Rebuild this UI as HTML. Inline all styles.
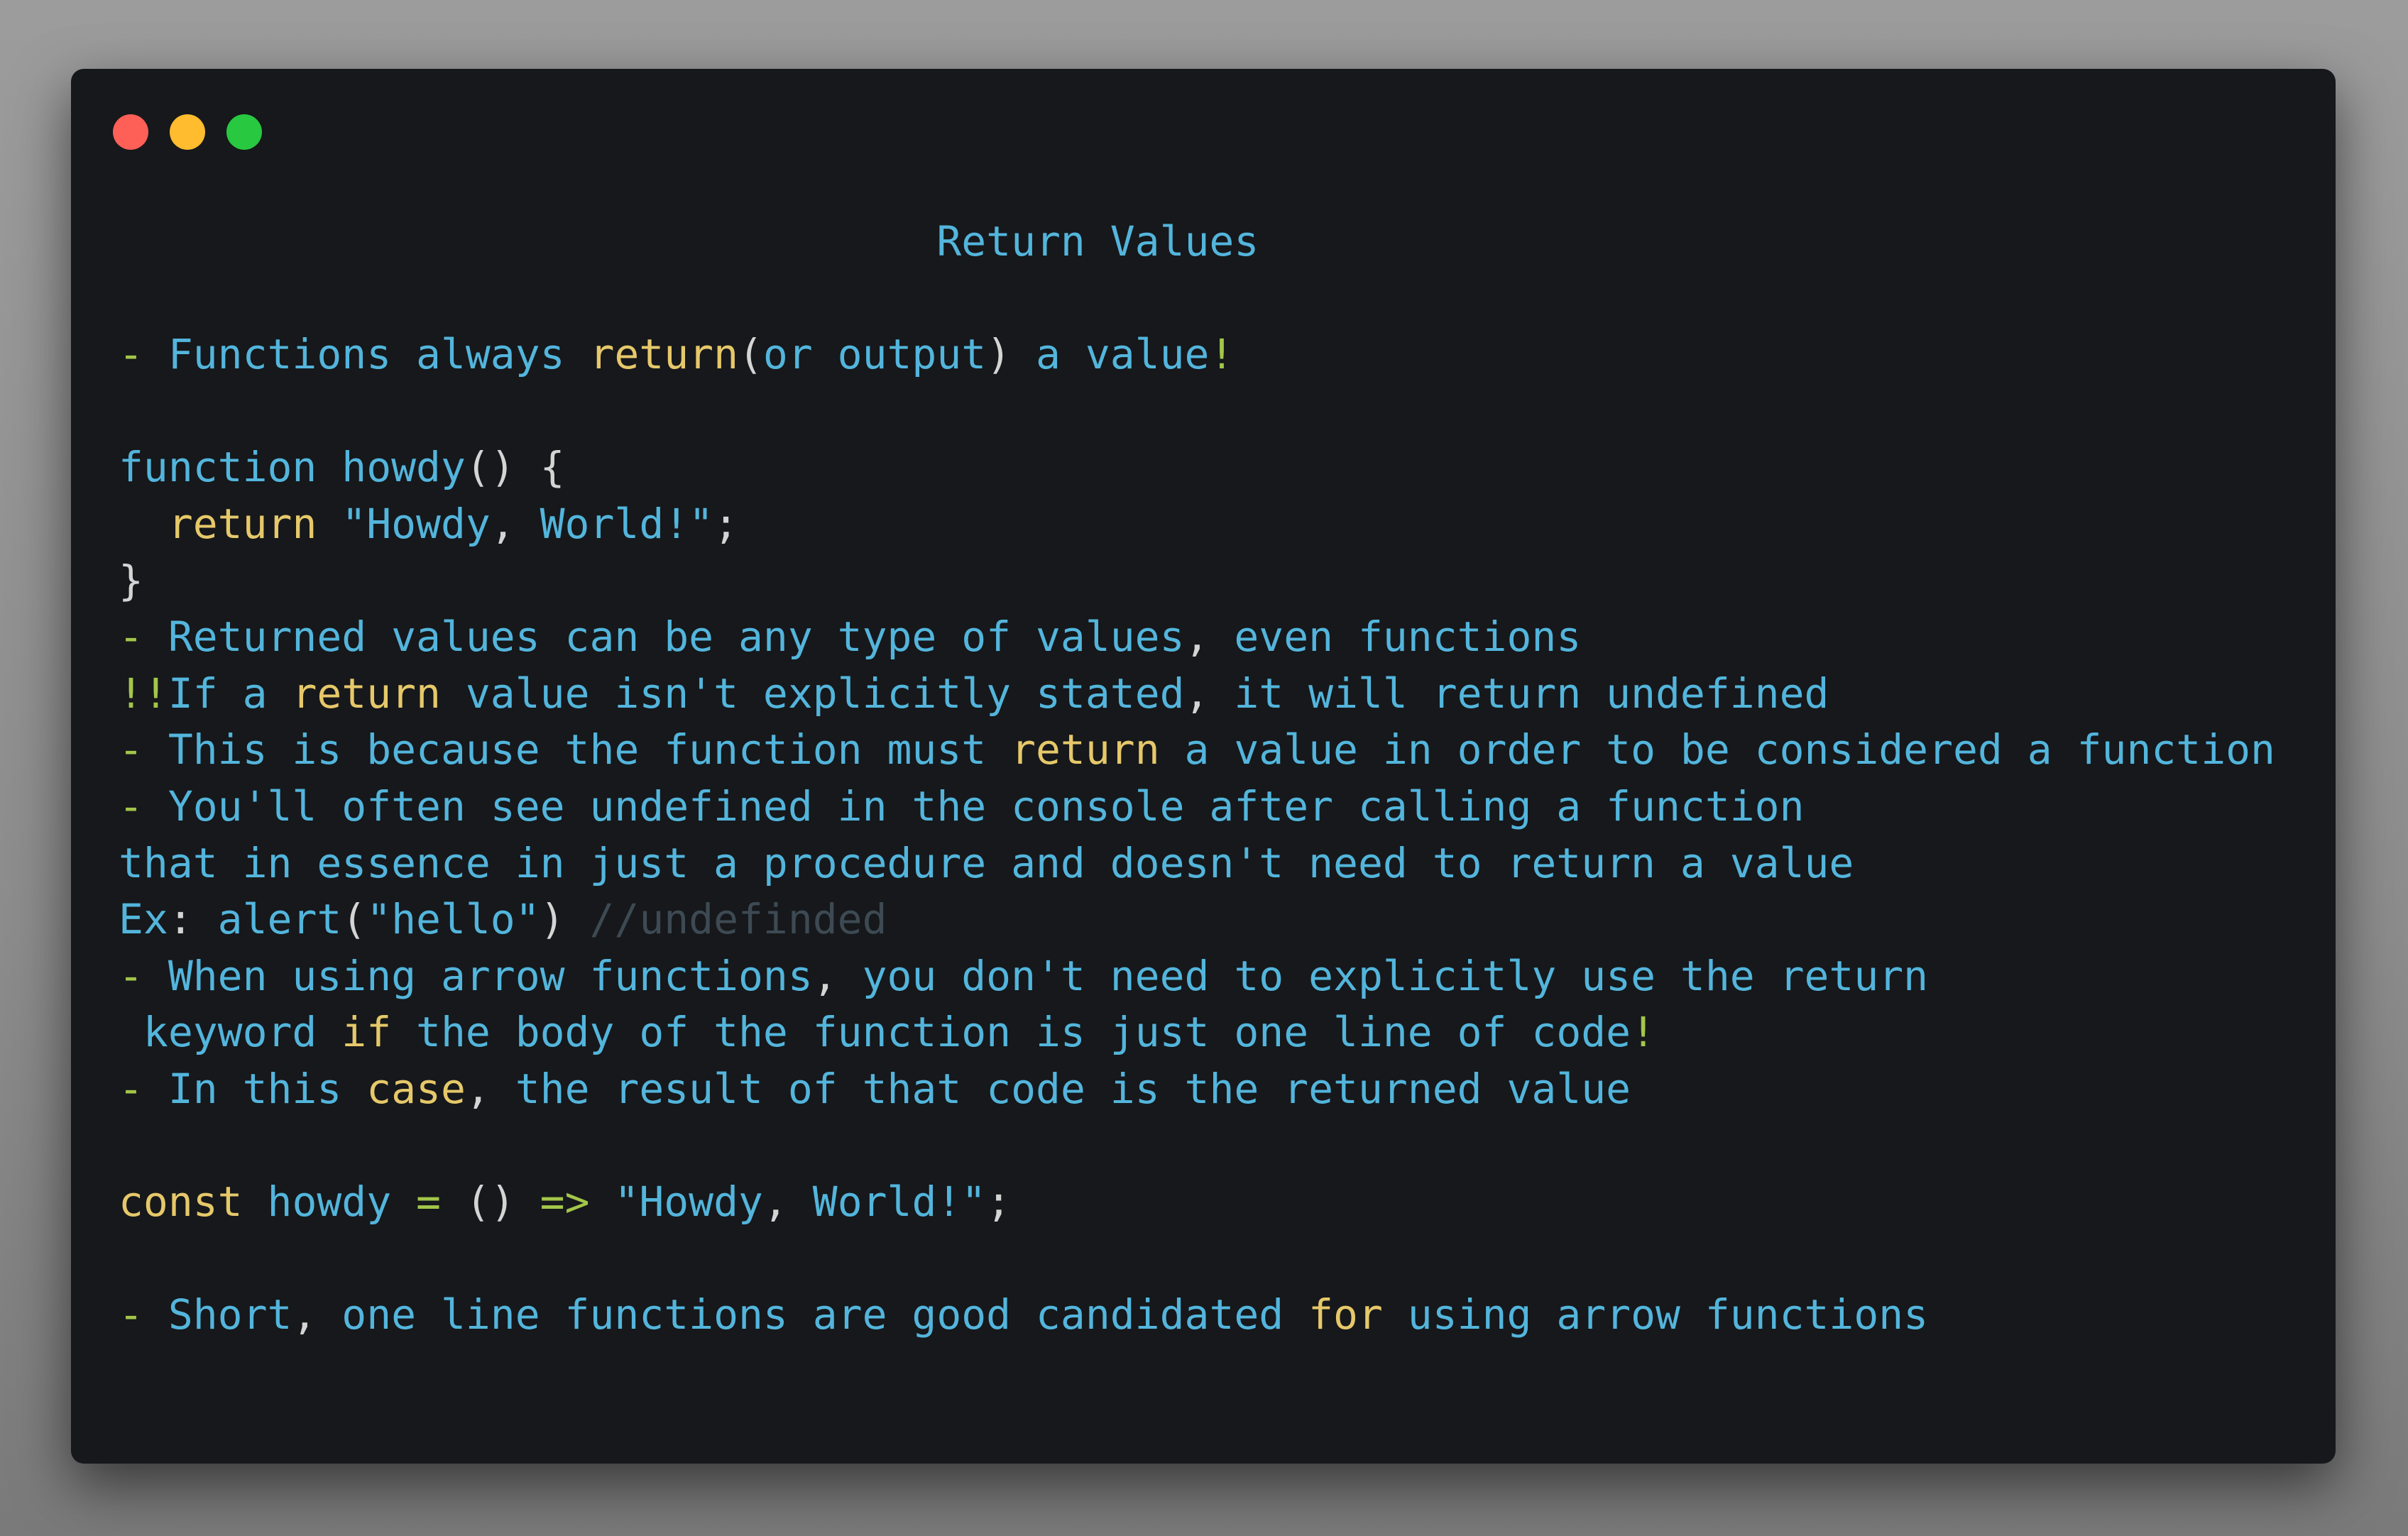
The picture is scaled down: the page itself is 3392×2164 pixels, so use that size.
<!DOCTYPE html>
<html><head><meta charset="utf-8"><style>
html,body{margin:0;padding:0;}
body{width:3392px;height:2164px;overflow:hidden;background:linear-gradient(180deg,#9c9c9c 0%,#8c8c8c 60%,#7a7a7a 100%);position:relative;}
.win{position:absolute;left:100px;top:97px;width:3190px;height:1965px;background:#16181b;border-radius:18px;box-shadow:0 30px 80px rgba(0,0,0,0.55);}
.dot{position:absolute;top:64px;width:50px;height:50px;border-radius:50%;}
pre{position:absolute;left:67px;top:204px;margin:0;font-family:"DejaVu Sans Mono","Liberation Mono",monospace;font-size:58px;line-height:79.6px;color:#53b5dc;white-space:pre;}
.g{color:#a3c64a}.y{color:#e6c86a}.w{color:#d4d4d4}.c{color:#3d4a53}
</style></head><body>
<div class="win">
<div class="dot" style="left:59px;background:#fe5f57"></div>
<div class="dot" style="left:139px;background:#febc2e"></div>
<div class="dot" style="left:219px;background:#28c840"></div>
<pre>                                 Return Values

<span class="g">-</span> Functions always <span class="y">return</span><span class="w">(</span>or output<span class="w">)</span> a value<span class="g">!</span>

function howdy<span class="w">() {</span>
  <span class="y">return</span> "Howdy<span class="w">,</span> World!"<span class="w">;</span>
<span class="w">}</span>
<span class="g">-</span> Returned values can be any type of values<span class="w">,</span> even functions
<span class="g">!!</span>If a <span class="y">return</span> value isn't explicitly stated<span class="w">,</span> it will return undefined
<span class="g">-</span> This is because the function must <span class="y">return</span> a value in order to be considered a function
<span class="g">-</span> You'll often see undefined in the console after calling a function
that in essence in just a procedure and doesn't need to return a value
Ex<span class="w">:</span> alert<span class="w">(</span>"hello"<span class="w">)</span> <span class="c">//undefinded</span>
<span class="g">-</span> When using arrow functions<span class="w">,</span> you don't need to explicitly use the return
 keyword <span class="y">if</span> the body of the function is just one line of code<span class="g">!</span>
<span class="g">-</span> In this <span class="y">case</span><span class="w">,</span> the result of that code is the returned value

<span class="y">const</span> howdy <span class="g">=</span> <span class="w">()</span> <span class="g">=&gt;</span> "Howdy<span class="w">,</span> World!"<span class="w">;</span>

<span class="g">-</span> Short<span class="w">,</span> one line functions are good candidated <span class="y">for</span> using arrow functions</pre>
</div>
</body></html>
